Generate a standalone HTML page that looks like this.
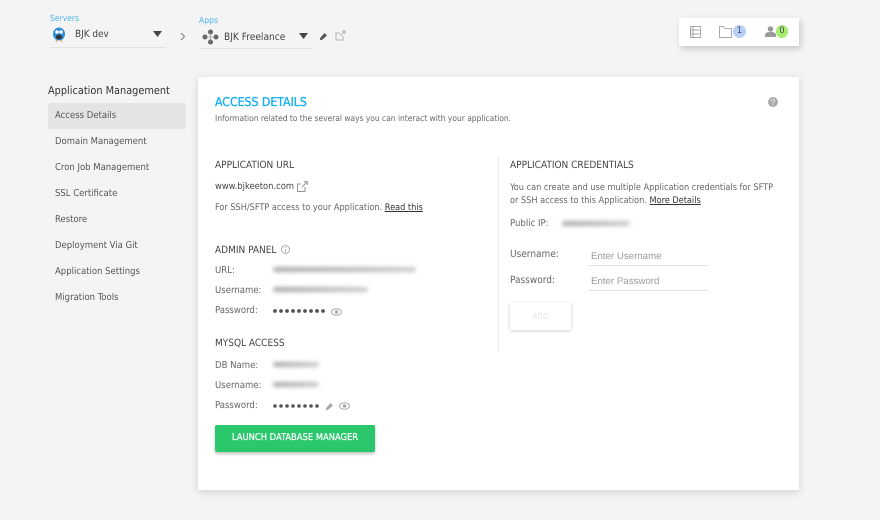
<!DOCTYPE html>
<html><head><meta charset="utf-8"><style>
html,body{margin:0;padding:0}
body{width:880px;height:520px;background:#f4f4f4;position:relative;overflow:hidden;font-family:"DejaVu Sans Condensed","DejaVu Sans",sans-serif;font-stretch:condensed;color:#555;text-rendering:geometricPrecision}
.t{position:absolute;white-space:nowrap;line-height:14px;font-size:8.9px}
.h{font-size:10px;color:#444}
.n{left:55px;color:#555;font-size:9.450px}
.l{color:#666;font-size:9.500px}
.p{color:#666;font-size:9.100px}
.b{position:absolute;height:5px;background:linear-gradient(90deg,#aaa,#bbb 60%,#ccc);filter:blur(2px);border-radius:3px}
.r{position:absolute;height:1px;background:#e2e2e2}
.e{font-family:"Liberation Sans",sans-serif;font-stretch:normal;color:#999;font-size:9.700px}
svg{position:absolute;overflow:visible}
u{color:#333}
</style></head><body>
<div class="t" style="left:50px;top:12px;color:#4db5ec;font-size:8.500px">Servers</div>
<svg style="left:52px;top:27px" width="14" height="15" viewBox="0 0 14 15"><ellipse cx="7" cy="7" rx="6" ry="6.500" fill="#2d8fd8"/><circle cx="5" cy="5" r="1.800" fill="#fff"/><circle cx="9" cy="5" r="1.800" fill="#fff"/><ellipse cx="7" cy="10" rx="3" ry="2.500" fill="#333"/><path d="M5 13l-1 2M9 13l1 2" stroke="#e89a3c"/></svg>
<div class="t" style="left:75px;top:28px;font-size:9.900px;color:#444">BJK dev</div>
<svg style="left:153px;top:31px" width="9" height="6"><path d="M0 0h9L4.500 6z" fill="#444"/></svg>
<div class="r" style="left:50px;top:47px;width:116px"></div>
<svg style="left:180px;top:32px" width="6" height="9"><path d="M1 1l3.500 3.500L1 8" fill="none" stroke="#888" stroke-width="1.200"/></svg>
<div class="t" style="left:199px;top:14px;color:#4db5ec;font-size:8.500px">Apps</div>
<svg style="left:202px;top:29px" width="17" height="16" fill="#666"><circle cx="8.500" cy="3" r="2.500"/><circle cx="8.500" cy="13" r="2.500"/><circle cx="3" cy="8" r="2.500"/><circle cx="14" cy="8" r="2.500"/><path d="M8.500 3v10M3 8h11" stroke="#888" stroke-width=".6"/></svg>
<div class="t" style="left:224px;top:31px;font-size:10.100px;color:#444">BJK Freelance</div>
<svg style="left:299px;top:33px" width="9" height="6"><path d="M0 0h9L4.500 6z" fill="#444"/></svg>
<div class="r" style="left:199px;top:48px;width:113px"></div>
<svg style="left:319px;top:32px" width="9" height="9"><path d="M.5 8.500l1-3 4-4.500 2.500 2.500-4.500 4z" fill="#555"/></svg>
<svg style="left:335px;top:30px" width="11" height="11" fill="none" stroke="#b5b5b5" stroke-width="1.100"><path d="M8 6v4H1V3h4M5 6l5-5M7 1h3v3"/></svg>

<div style="position:absolute;left:679px;top:18px;width:120px;height:28px;background:#fff;box-shadow:2px 3px 6px rgba(0,0,0,.18)"></div>
<svg style="left:690px;top:26px" width="11" height="12" fill="none" stroke="#aaa"><rect x=".5" y=".5" width="10" height="11"/><path d="M.5 4h10M.5 8h10M3 .5v11"/></svg>
<svg style="left:719px;top:26px" width="13" height="12" fill="none" stroke="#aaa"><path d="M.5 11.500V.5h4l1.500 2h6.500v9z"/></svg>
<div style="position:absolute;left:733px;top:25px;width:13px;height:13px;border-radius:50%;background:#b8cdf5;color:#445;font-size:9px;line-height:13px;text-align:center">1</div>
<svg style="left:765px;top:26px" width="11" height="11" fill="#999"><circle cx="5.500" cy="3" r="2.800"/><path d="M0 11V9c0-2 2-3 5.500-3S11 7 11 9v2z"/></svg>
<div style="position:absolute;left:776px;top:25px;width:12px;height:13px;border-radius:50%;background:#a5ec6f;color:#445;font-size:9px;line-height:13px;text-align:center">0</div>

<div class="t" style="left:48px;top:84px;font-size:10.850px;color:#333">Application Management</div>
<div style="position:absolute;left:48px;top:103px;width:138px;height:26px;background:#e4e4e4;border-radius:2px"></div>
<div class="t n" style="top:109px">Access Details</div>
<div class="t n" style="top:135px">Domain Management</div>
<div class="t n" style="top:161px">Cron Job Management</div>
<div class="t n" style="top:187px">SSL Certificate</div>
<div class="t n" style="top:213px">Restore</div>
<div class="t n" style="top:239px">Deployment Via Git</div>
<div class="t n" style="top:265px">Application Settings</div>
<div class="t n" style="top:291px">Migration Tools</div>

<div style="position:absolute;left:198px;top:77px;width:601px;height:413px;background:#fff;box-shadow:0 2px 8px rgba(0,0,0,.15)"></div>
<div class="t" style="left:215px;top:95px;font-size:12.200px;color:#12aef0;-webkit-text-stroke:.3px #12aef0">ACCESS DETAILS</div>
<div class="t" style="left:215px;top:111px;font-size:8.370px;color:#666">Information related to the several ways you can interact with your application.</div>
<svg style="left:768px;top:97px" width="10" height="10"><circle cx="5" cy="5" r="5" fill="#aaa"/><text x="5" y="8" font-size="8" fill="#fff" text-anchor="middle" font-family="Liberation Sans">?</text></svg>

<div class="t h" style="left:215px;top:159px">APPLICATION URL</div>
<div class="t" style="left:215px;top:180px;color:#444;font-size:9.300px">www.bjkeeton.com</div>
<svg style="left:297px;top:181px" width="11" height="11" fill="none" stroke="#999" stroke-width="1.100"><path d="M8 6v4.500H.5V3H4M5 6l5-5M7 .7h3.300V4"/></svg>
<div class="t p" style="left:215px;top:201px">For SSH/SFTP access to your Application. <u>Read this</u></div>

<div class="t h" style="left:215px;top:244px">ADMIN PANEL</div>
<svg style="left:281px;top:245px" width="9" height="9" fill="none" stroke="#aaa"><circle cx="4.500" cy="4.500" r="4"/><path d="M4.500 4v3M4.500 2v1"/></svg>
<div class="t l" style="left:215px;top:264px">URL:</div>
<div class="b" style="left:273px;top:267px;width:143px"></div>
<div class="t l" style="left:215px;top:284px">Username:</div>
<div class="b" style="left:273px;top:287px;width:95px"></div>
<div class="t l" style="left:215px;top:304px">Password:</div>
<svg style="left:273px;top:309px" width="54" height="4" fill="#555"><circle cx="2" cy="2" r="1.900"/><circle cx="8" cy="2" r="1.900"/><circle cx="14" cy="2" r="1.900"/><circle cx="20" cy="2" r="1.900"/><circle cx="26" cy="2" r="1.900"/><circle cx="32" cy="2" r="1.900"/><circle cx="38" cy="2" r="1.900"/><circle cx="44" cy="2" r="1.900"/><circle cx="50" cy="2" r="1.900"/></svg>
<svg style="left:331px;top:308px" width="11" height="8" fill="none" stroke="#aaa"><ellipse cx="5.500" cy="4" rx="5" ry="3.300"/><circle cx="5.500" cy="4" r="1.300" fill="#aaa"/></svg>

<div class="t h" style="left:215px;top:337px">MYSQL ACCESS</div>
<div class="t l" style="left:215px;top:359px">DB Name:</div>
<div class="b" style="left:273px;top:362px;width:46px"></div>
<div class="t l" style="left:215px;top:379px">Username:</div>
<div class="b" style="left:273px;top:382px;width:46px"></div>
<div class="t l" style="left:215px;top:399px">Password:</div>
<svg style="left:273px;top:404px" width="48" height="4" fill="#555"><circle cx="2" cy="2" r="1.800"/><circle cx="8" cy="2" r="1.800"/><circle cx="14" cy="2" r="1.800"/><circle cx="20" cy="2" r="1.800"/><circle cx="26" cy="2" r="1.800"/><circle cx="32" cy="2" r="1.800"/><circle cx="38" cy="2" r="1.800"/><circle cx="44" cy="2" r="1.800"/></svg>
<svg style="left:325px;top:402px" width="9" height="9"><path d="M.5 8.500l1-3 4-4.500 2.500 2.500-4.500 4z" fill="#aaa"/></svg>
<svg style="left:339px;top:402px" width="11" height="8" fill="none" stroke="#aaa"><ellipse cx="5.500" cy="4" rx="5" ry="3.300"/><circle cx="5.500" cy="4" r="1.300" fill="#aaa"/></svg>

<div style="position:absolute;left:215px;top:425px;width:160px;height:27px;background:#2bc76c;border-radius:2px;box-shadow:0 2px 3px rgba(0,0,0,.25);color:#fff;font-size:9.300px;line-height:26px;text-align:center;-webkit-text-stroke:.2px #fff">LAUNCH DATABASE MANAGER</div>

<div style="position:absolute;left:498px;top:157px;width:1px;height:195px;background:#ececec"></div>
<div class="t h" style="left:510px;top:159px">APPLICATION CREDENTIALS</div>
<div class="t p" style="left:510px;top:181px">You can create and use multiple Application credentials for SFTP</div>
<div class="t p" style="left:510px;top:194px">or SSH access to this Application. <u>More Details</u></div>
<div class="t l" style="left:510px;top:217px">Public IP:</div>
<div class="b" style="left:562px;top:221px;width:68px"></div>
<div class="t l" style="left:510px;top:248px;font-size:10px">Username:</div>
<div class="t e" style="left:591px;top:250px">Enter Username</div>
<div class="r" style="left:589px;top:265px;width:119px"></div>
<div class="t l" style="left:510px;top:274px;font-size:10px">Password:</div>
<div class="t e" style="left:591px;top:275px">Enter Password</div>
<div class="r" style="left:589px;top:290px;width:119px"></div>
<div style="position:absolute;left:510px;top:303px;width:61px;height:27px;background:#fff;border-radius:2px;box-shadow:0 1px 4px rgba(0,0,0,.18);color:#e4e4e4;font-size:8px;line-height:27px;text-align:center">ADD</div>
</body></html>
